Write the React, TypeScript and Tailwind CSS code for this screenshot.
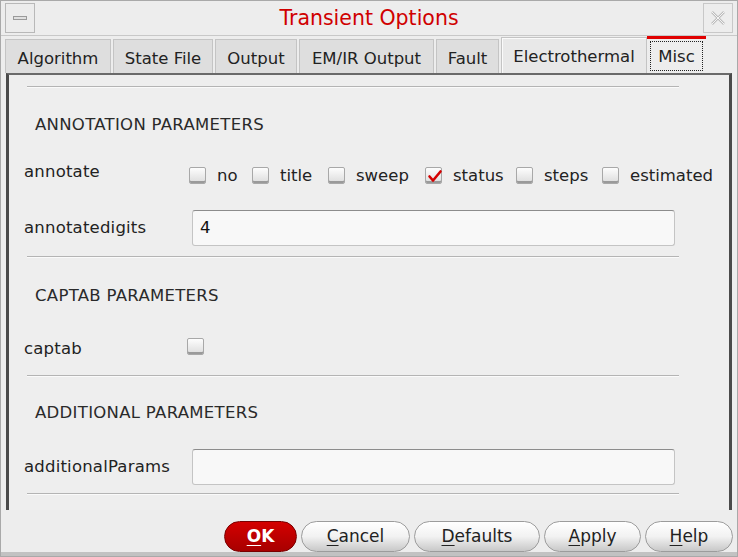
import React from 'react';

const font = { fontFamily: '"DejaVu Sans", "Liberation Sans", sans-serif' };

const tabs = ['Algorithm', 'State File', 'Output', 'EM/IR Output', 'Fault'];
const tabWidths = ['w-[106px]', 'w-[100px]', 'w-[82px]', 'w-[135px]', 'w-[63px]'];

const annotateOptions = [
    { label: 'no', checked: false, w: 'w-[63px]' },
    { label: 'title', checked: false, w: 'w-[76px]' },
    { label: 'sweep', checked: false, w: 'w-[97px]' },
    { label: 'status', checked: true, w: 'w-[91px]' },
    { label: 'steps', checked: false, w: 'w-[86px]' },
    { label: 'estimated', checked: false, w: 'w-[112px]' },
];

const CheckBox: React.FC<{ checked?: boolean }> = ({ checked }) => (
    <span className="relative inline-block shrink-0 w-[17px] h-[17px] rounded-[2px] border border-[#a8a8a8] bg-gradient-to-b from-[#fdfdfd] to-[#dcdcdc] shadow-[inset_0_-2px_0_#9a9a9a]">
        {checked && (
            <svg viewBox="0 0 17 17" className="absolute inset-0 w-[17px] h-[17px]">
                <path d="M3.5 8.5 L7 12.5 L14.5 3.5" fill="none" stroke="#d40000" strokeWidth="2.6" strokeLinecap="round" strokeLinejoin="round" />
            </svg>
        )}
    </span>
);

const Separator: React.FC = () => <div className="ml-[18px] mr-[50px] h-[2px] border-t border-[#b4b4b4] border-b-[#fafafa] border-b" />;

const SectionTitle: React.FC<{ children: React.ReactNode }> = ({ children }) => (
    <div className="pl-[26px] text-[16.5px] tracking-[0.3px] text-[#2a2a2a]">{children}</div>
);

const TextField: React.FC<{ value?: string }> = ({ value }) => (
    <div className="w-[483px] h-[36px] rounded-[3px] border border-[#c4c4c4] border-t-[#8c8c8c] bg-[#f8f8f8] flex items-center px-[7px] text-[16.5px] text-[#111]">
        {value}
    </div>
);

const DialogButton: React.FC<{ label: string; mnemonic: string; primary?: boolean; width: string }> = ({ label, mnemonic, primary, width }) => {
    const rest = label.slice(mnemonic.length);
    return (
        <button
            className={
                primary
                    ? `${width} h-[31px] rounded-full bg-gradient-to-b from-[#d40000] to-[#a80000] border border-[#7a0000] text-white font-bold text-[17px] flex items-center justify-center`
                    : `${width} h-[31px] rounded-full bg-gradient-to-b from-[#ffffff] via-[#f2f2f2] to-[#c8c8c8] border border-[#9c9c9c] text-[#222] text-[17px] flex items-center justify-center`
            }
        >
            <span className="underline underline-offset-[3px]">{mnemonic}</span>
            <span>{rest}</span>
        </button>
    );
};

export default function App() {
    return (
        <div style={font} className="w-[738px] h-[557px] bg-[#ededed] border border-[#a9a9a9] flex flex-col overflow-hidden select-none">
            {/* title bar */}
            <div className="h-[35px] flex items-center px-[4px] border-b border-[#c8c8c8]">
                <div className="w-[30px] h-[30px] border border-[#b8b8b8] flex items-center justify-center bg-[#ececec]">
                    <div className="w-[14px] h-[4px] border border-[#9a9a9a] bg-[#e0e0e0]" />
                </div>
                <div className="flex-1 text-center text-[20.5px] text-[#d00000]">Transient Options</div>
                <div className="w-[30px] h-[30px] border border-[#c8c8c8] flex items-center justify-center">
                    <svg viewBox="0 0 20 20" className="w-[20px] h-[20px]">
                        <path d="M4 4 L16 16 M16 4 L4 16" stroke="#bdbdbd" strokeWidth="2.5" fill="none" />
                        <path d="M4 4 L16 16 M16 4 L4 16" stroke="#f4f4f4" strokeWidth="1" fill="none" />
                    </svg>
                </div>
            </div>

            {/* tabs */}
            <div className="h-[37px] flex items-end pl-[4px] text-[16.5px] text-[#222]">
                {tabs.map((t, i) => (
                    <div
                        key={t}
                        className={`${tabWidths[i]} h-[34px] mr-[2px] flex items-center justify-center pt-[5px] bg-[#dedede] border border-[#c4c4c4] border-b-0`}
                    >
                        {t}
                    </div>
                ))}
                <div className="w-[146px] h-[36px] flex items-center justify-center pt-[3px] bg-[#e8e8e8] border border-[#c4c4c4] border-b-0 shadow-[inset_1px_1px_0_#fafafa]">
                    Electrothermal
                </div>
                <div className="w-[59px] h-[37px] flex flex-col bg-[#ededed]">
                    <div className="h-[3px] bg-[#e00000]" />
                    <div className="flex-1 flex items-center justify-center px-[3px] pb-[2px] pt-[2px]">
                        <div className="w-full h-full border border-dotted border-[#222] flex items-center justify-center pt-[2px]">Misc</div>
                    </div>
                </div>
            </div>

            {/* tab panel */}
            <div className="h-[438px] mx-[5px] border-l-[3px] border-r-[3px] border-t-2 border-[#4a4a4a] border-t-[#6a6a6a] bg-[#eeeeee] text-[16.5px] tracking-[0.2px] text-[#222] pt-[11px]">
                <Separator />
                <div className="h-[74px] flex items-center">
                    <SectionTitle>ANNOTATION PARAMETERS</SectionTitle>
                </div>
                <div className="flex items-center h-[26px] mt-[1px]">
                    <div className="w-[180px] pl-[15px] -mt-[7px]">annotate</div>
                    <div className="flex items-center tracking-normal">
                        {annotateOptions.map((o) => (
                            <div key={o.label} className={`flex items-center ${o.w}`}>
                                <CheckBox checked={o.checked} />
                                <span className="ml-[11px]">{o.label}</span>
                            </div>
                        ))}
                    </div>
                </div>
                <div className="flex items-center mt-[21px] h-[36px]">
                    <div className="w-[183px] pl-[15px]">annotatedigits</div>
                    <TextField value="4" />
                </div>
                <div className="mt-[10px]">
                    <Separator />
                </div>
                <div className="h-[76px] flex items-center">
                    <SectionTitle>CAPTAB PARAMETERS</SectionTitle>
                </div>
                <div className="flex items-center h-[20px] mt-[3px]">
                    <div className="w-[178px] pl-[15px] mt-[4px]">captab</div>
                    <CheckBox />
                </div>
                <div className="mt-[18px]">
                    <Separator />
                </div>
                <div className="h-[72px] flex items-center">
                    <SectionTitle>ADDITIONAL PARAMETERS</SectionTitle>
                </div>
                <div className="flex items-center h-[36px]">
                    <div className="w-[183px] pl-[15px]">additionalParams</div>
                    <TextField />
                </div>
                <div className="mt-[8px]">
                    <Separator />
                </div>
            </div>

            {/* buttons */}
            <div className="flex-1 flex items-center justify-end gap-[4px] pr-[4px] pt-[11px] border-b-4 border-[#c2c2c2]">
                <DialogButton label="OK" mnemonic="O" primary width="w-[73px]" />
                <DialogButton label="Cancel" mnemonic="C" width="w-[109px]" />
                <DialogButton label="Defaults" mnemonic="D" width="w-[126px]" />
                <DialogButton label="Apply" mnemonic="A" width="w-[97px]" />
                <DialogButton label="Help" mnemonic="H" width="w-[88px]" />
            </div>
        </div>
    );
}
